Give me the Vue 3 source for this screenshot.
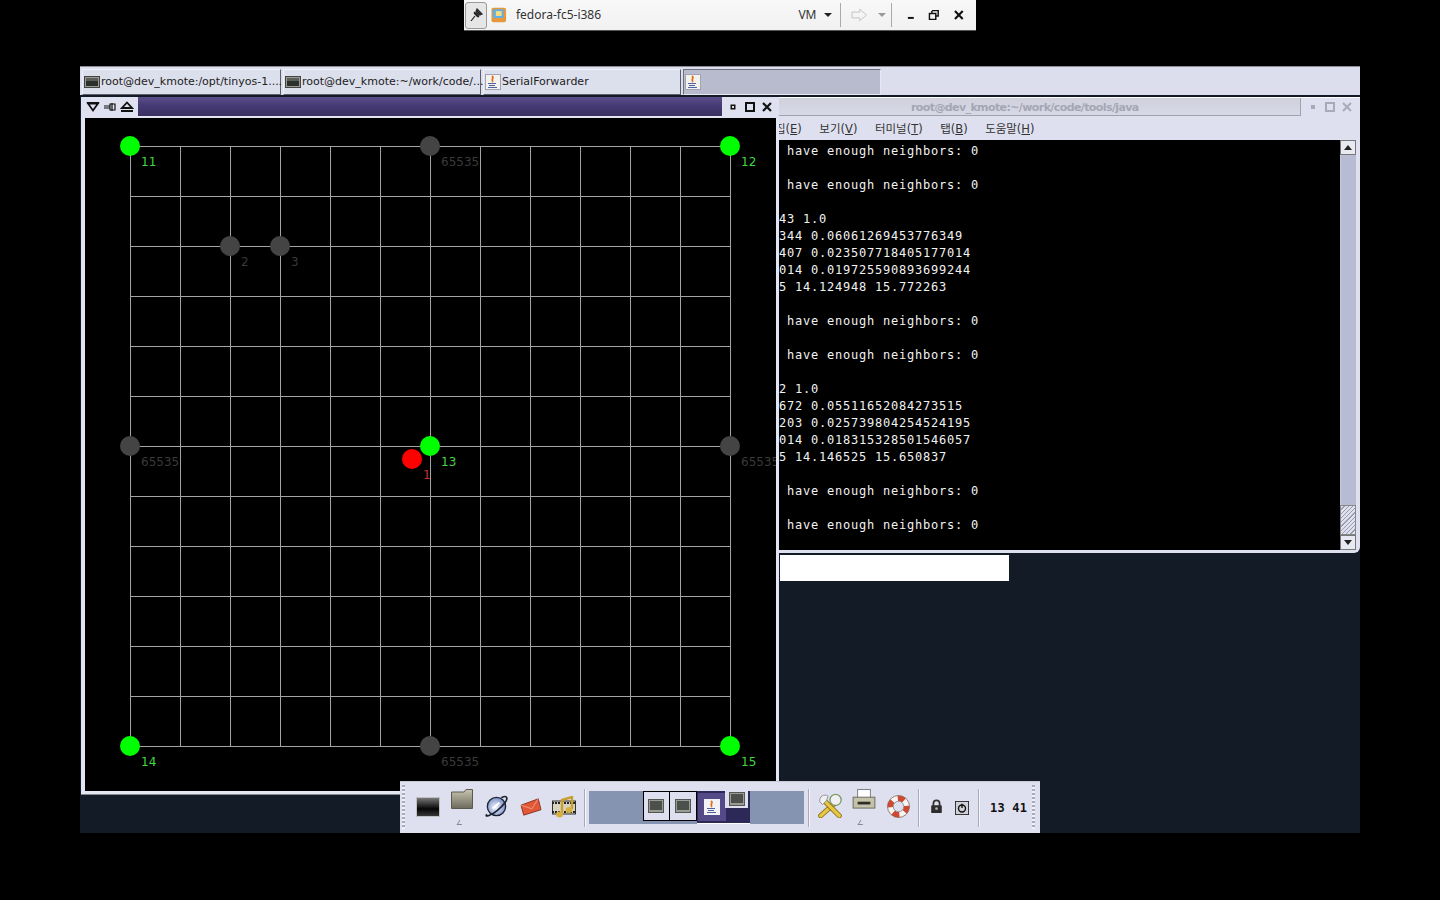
<template>
  <div class="screen">
    <!-- vm toolbar -->
    <div class="vmbar">
      <div class="pin">
        <svg width="18" height="18" viewBox="0 0 18 18"><path d="M4 15 L8 10 M7 6 L12 11 M9 4 L14 9 M10 3 L15 8 L12 9 L9 6 Z M7 7 L11 11" stroke="#222" stroke-width="1.2" fill="none"/></svg>
      </div>
      <svg class="vmicon" width="16" height="16" viewBox="0 0 16 16">
        <rect x="0.5" y="0.5" width="15" height="15" rx="2" fill="#e6983c"/>
        <rect x="2" y="2" width="11" height="9" rx="1" fill="#5fb0e6"/>
        <rect x="5" y="4" width="6" height="5" fill="#f4dc80"/>
      </svg>
      <span class="vmname">fedora-fc5-i386</span>
      <span class="vmmenu">VM</span>
      <span class="caret"></span>
      <span class="vsep vsep1"></span>
      <svg class="arrow" width="18" height="14" viewBox="0 0 18 14"><path d="M1 4 H9 V1 L16 7 L9 13 V10 H1 Z" fill="#f4f4f4" stroke="#c4c4c4"/></svg>
      <span class="caret light"></span>
      <span class="vsep vsep2"></span>
      <svg class="winbtn" width="12" height="12" viewBox="0 0 12 12"><rect x="3" y="8" width="6" height="2" fill="#111"/></svg>
      <svg class="winbtn" width="12" height="12" viewBox="0 0 12 12"><path d="M4 1.5 H10.5 V7 H8.5 M1.5 4.5 H8 V10.5 H1.5 Z M4 2 V4" stroke="#111" stroke-width="1.5" fill="none"/></svg>
      <svg class="winbtn last" width="12" height="12" viewBox="0 0 12 12"><path d="M2 2 L10 10 M10 2 L2 10" stroke="#111" stroke-width="2.2"/></svg>
    </div>

    <div class="desktop">
      <!-- task bar -->
      <div class="taskbar">
        <div v-for="t in tabs" :key="t.id" class="tab" :class="{ active: t.active }">
          <svg v-if="t.kind === 'term'" class="tabicon" width="16" height="16" viewBox="0 0 16 16">
            <rect x="0.5" y="2.5" width="15" height="11" fill="#9a9c94" stroke="#444"/>
            <rect x="2" y="4" width="12" height="8" fill="#2c302c"/>
            <rect x="2" y="4" width="12" height="3" fill="#5c605a"/>
          </svg>
          <svg v-else class="tabicon" width="16" height="16" viewBox="0 0 16 16">
            <rect x="0.5" y="0.5" width="15" height="15" fill="#f4f2ec" stroke="#a0a4b4"/>
            <path d="M7 2 C10 4 5 5 8 8" stroke="#e07020" stroke-width="1.8" fill="none"/>
            <path d="M3 9.5 H11 M4 11.5 H10 M3 13.5 H12" stroke="#5060a0" stroke-width="1.1"/>
          </svg>
          <span class="tabtext">{{ t.label }}</span>
        </div>
      </div>

      <!-- terminal window -->
      <div class="termwin">
        <div class="termtitle">
          <div class="termcaption">root@dev_kmote:~/work/code/tools/java</div>
          <div class="termbtns">
            <svg width="12" height="12" viewBox="0 0 12 12"><rect x="4" y="4" width="4" height="4" fill="#a8aab8"/></svg>
            <svg width="12" height="12" viewBox="0 0 12 12"><rect x="2" y="2" width="8" height="8" fill="none" stroke="#a8aab8" stroke-width="2"/></svg>
            <svg width="12" height="12" viewBox="0 0 12 12"><path d="M2 2 L10 10 M10 2 L2 10" stroke="#a8aab8" stroke-width="2"/></svg>
          </div>
        </div>
        <div class="menubar">
          <span v-for="m in menus" :key="m.key" class="menuitem">{{ m.label }}(<u>{{ m.key }}</u>)</span>
        </div>
        <div class="termbody">
          <pre class="output">{{ output }}</pre>
          <div class="scrollbar">
            <div class="sbtn"><span class="up"></span></div>
            <div class="strack"></div>
            <div class="sgrip"></div>
            <div class="sbtn"><span class="down"></span></div>
          </div>
        </div>
      </div>

      <div class="whitebox"></div>

      <!-- oscilloscope window -->
      <div class="gridwin">
        <div class="gridtitle">
          <div class="titleleft">
            <svg width="14" height="12" viewBox="0 0 14 12"><path d="M2 2.5 H12 L7 9.5 Z" fill="none" stroke="#111" stroke-width="1.8"/><rect x="1" y="1" width="12" height="2" fill="#111"/></svg>
            <svg width="14" height="12" viewBox="0 0 14 12"><path d="M1 5 H7 M1 7 H7 M7 3 H12 V9 H7 Z M9 2 V10" fill="none" stroke="#111" stroke-width="1.2"/></svg>
            <svg width="14" height="12" viewBox="0 0 14 12"><path d="M7 1.5 L12 7 H2 Z" fill="none" stroke="#111" stroke-width="1.8"/><rect x="1" y="9" width="12" height="2" fill="#111"/></svg>
          </div>
          <div class="titlefill"></div>
          <div class="titleright">
            <svg width="12" height="12" viewBox="0 0 12 12"><rect x="3.5" y="3.5" width="5" height="5" fill="#111"/><rect x="5" y="5" width="2" height="2" fill="#dfe1f0"/></svg>
            <svg width="12" height="12" viewBox="0 0 12 12"><rect x="2" y="2" width="8" height="8" fill="none" stroke="#111" stroke-width="2"/></svg>
            <svg width="12" height="12" viewBox="0 0 12 12"><path d="M2 2 L10 10 M10 2 L2 10" stroke="#111" stroke-width="2.2"/></svg>
          </div>
        </div>
        <svg class="canvas" width="691" height="673" viewBox="85 118 691 673">
          <line v-for="x in lines" :key="'v' + x" :x1="x" y1="146" :x2="x" y2="746" class="gridline" />
          <line v-for="y in lines2" :key="'h' + y" x1="130" :y1="y" x2="730" :y2="y" class="gridline" />
          <g v-for="n in nodes" :key="n.x + '-' + n.y">
            <circle :cx="n.x" :cy="n.y" r="10" :fill="n.fill" />
            <text :x="n.x + n.dx" :y="n.y + 19.5" :fill="n.color" class="nodelabel">{{ n.label }}</text>
          </g>
        </svg>
      </div>

      <!-- gnome panel -->
      <div class="panel">
        <div class="handle"></div>

        <svg class="ic term" width="24" height="20" viewBox="0 0 24 20">
          <defs><linearGradient id="tg" x1="0" y1="0" x2="0" y2="1"><stop offset="0" stop-color="#7c7c7c"/><stop offset="0.6" stop-color="#050505"/><stop offset="1" stop-color="#3c3c3c"/></linearGradient></defs>
          <rect x="0.5" y="0.5" width="23" height="19" fill="url(#tg)" stroke="#c0c0c0"/>
        </svg>
        <div class="drawer folder">
          <svg width="22" height="20" viewBox="0 0 22 20">
            <defs><linearGradient id="fg" x1="0" y1="0" x2="0" y2="1"><stop offset="0" stop-color="#c8c4b0"/><stop offset="1" stop-color="#6e6a5c"/></linearGradient></defs>
            <path d="M0.5 3 H13 L15 0.5 H21.5 V19.5 H0.5 Z" fill="url(#fg)" stroke="#5c5a50"/>
          </svg>
          <i></i>
        </div>
        <svg class="ic globe" width="25" height="25" viewBox="0 0 26 26">
          <defs><radialGradient id="gg" cx="0.45" cy="0.55" r="0.6"><stop offset="0" stop-color="#f4f6ff"/><stop offset="1" stop-color="#7088c0"/></radialGradient></defs>
          <circle cx="13" cy="13" r="9.5" fill="url(#gg)" stroke="#1c2434" stroke-width="1.4"/>
          <path d="M3 21 C0 25 8 22 14 17 C20 12 26 5 23 3 C22 2 20 3 18 4" fill="none" stroke="#1c2434" stroke-width="1.8"/>
          <path d="M9 15 L16 9" stroke="#fff" stroke-width="2"/>
        </svg>
        <svg class="ic mail" width="24" height="20" viewBox="0 0 24 22">
          <path d="M1 9 L20 2 L23 14 L4 20 Z" fill="#e05838" stroke="#8a3020"/>
          <path d="M1 9 L13 13 L20 2" fill="none" stroke="#f0a080"/>
        </svg>
        <svg class="ic film" width="24" height="22" viewBox="0 0 24 22">
          <rect x="0.5" y="5" width="23" height="13" fill="#d8d4c0" stroke="#333"/>
          <path d="M0 7 H24 M0 16 H24" stroke="#222" stroke-width="2" stroke-dasharray="2 1"/>
          <path d="M10 18 V4 L20 1 V13" fill="none" stroke="#c8a030" stroke-width="2.4"/>
          <ellipse cx="7.5" cy="18.5" rx="3.5" ry="3" fill="#d8b040"/>
          <ellipse cx="17" cy="14" rx="3.5" ry="3" fill="#d8b040"/>
        </svg>

        <span class="sep sep1"></span>

        <div class="pager">
          <div class="wsp"></div>
          <div class="wsp">
            <div class="tasks">
              <div class="tbtn"><svg width="16" height="14" viewBox="0 0 16 14"><rect x="0.5" y="0.5" width="15" height="13" fill="#9a9c94" stroke="#555"/><rect x="2" y="2" width="12" height="9" fill="#4c504c"/></svg></div>
              <div class="tbtn"><svg width="16" height="14" viewBox="0 0 16 14"><rect x="0.5" y="0.5" width="15" height="13" fill="#9a9c94" stroke="#555"/><rect x="2" y="2" width="12" height="9" fill="#4c504c"/></svg></div>
            </div>
          </div>
          <div class="wsp current">
            <div class="curbtn"><svg width="16" height="16" viewBox="0 0 16 16"><rect width="16" height="16" fill="#f2f2f6"/><path d="M7 2 C10 4 5 5 8 8" stroke="#e07020" stroke-width="1.8" fill="none"/><path d="M3 9.5 H11 M4 11.5 H10 M3 13.5 H12" stroke="#5060a0" stroke-width="1.1"/></svg></div>
            <div class="curtop"><svg width="16" height="14" viewBox="0 0 16 14"><rect x="0.5" y="0.5" width="15" height="13" fill="#9a9c94" stroke="#555"/><rect x="2" y="2" width="12" height="9" fill="#4c504c"/></svg></div>
          </div>
          <div class="wsp"></div>
        </div>

        <span class="sep sep2"></span>

        <svg class="ic tools" width="26" height="25" viewBox="0 0 28 26">
          <path d="M4 24 L22 8" stroke="#8a7020" stroke-width="5.5" stroke-linecap="round"/>
          <path d="M4 24 L22 8" stroke="#e8c840" stroke-width="3.6" stroke-linecap="round"/>
          <path d="M24 24 L8 8" stroke="#8a7020" stroke-width="5.5" stroke-linecap="round"/>
          <path d="M24 24 L8 8" stroke="#e8c840" stroke-width="3.6" stroke-linecap="round"/>
          <path d="M3 9 C2 3 8 0 12 3 L10 8 L6 12 Z" fill="#f0f0f4" stroke="#8a8a94"/>
          <circle cx="20" cy="7" r="6" fill="#f0f0f4" stroke="#7a9a60" stroke-width="1.4"/>
        </svg>
        <div class="drawer printer">
          <svg width="24" height="20" viewBox="0 0 26 22">
            <rect x="6" y="0.5" width="14" height="10" fill="#fff" stroke="#777"/>
            <rect x="1" y="9" width="24" height="12" fill="#c4c2a8" stroke="#66645a"/>
            <rect x="6" y="14" width="14" height="3" fill="#2c2c24"/>
          </svg>
          <i></i>
        </div>
        <svg class="ic buoy" width="23" height="23" viewBox="0 0 24 24">
          <circle cx="12" cy="12" r="8.5" fill="none" stroke="#f4f4f4" stroke-width="6"/>
          <circle cx="12" cy="12" r="8.5" fill="none" stroke="#d04830" stroke-width="6" stroke-dasharray="7 6.35" stroke-dashoffset="1"/>
          <circle cx="12" cy="12" r="11.5" fill="none" stroke="#80604c" stroke-width="0.8"/>
          <circle cx="12" cy="12" r="5.5" fill="#dfe0ef" stroke="#80807c" stroke-width="0.8"/>
        </svg>

        <span class="sep sep3"></span>

        <svg class="lock" width="13" height="15" viewBox="0 0 14 17">
          <path d="M3.5 8 V5 C3.5 0.5 10.5 0.5 10.5 5 V8" fill="none" stroke="#333" stroke-width="2"/>
          <rect x="1" y="7" width="12" height="9" rx="1" fill="#2c2c2c"/>
          <circle cx="7" cy="11" r="1.6" fill="#aaa"/>
        </svg>
        <svg class="power" width="14" height="14" viewBox="0 0 16 16">
          <rect x="0.5" y="0.5" width="15" height="15" fill="#d0d0d8" stroke="#222"/>
          <circle cx="8" cy="8.5" r="4" fill="none" stroke="#111" stroke-width="1.6"/>
          <path d="M8 3 V8" stroke="#111" stroke-width="1.6"/>
        </svg>

        <span class="sep sep4"></span>

        <div class="clock">13 41</div>
        <div class="handle right"></div>
      </div>
    </div>
  </div>
</template>

<script setup>
const tabs = [
  { id: 1, kind: 'term', label: 'root@dev_kmote:/opt/tinyos-1....' },
  { id: 2, kind: 'term', label: 'root@dev_kmote:~/work/code/...' },
  { id: 3, kind: 'java', label: 'SerialForwarder' },
  { id: 4, kind: 'java', label: '', active: true }
]

const menus = [
  { label: '집', key: 'E' },
  { label: '보기', key: 'V' },
  { label: '터미널', key: 'T' },
  { label: '탭', key: 'B' },
  { label: '도움말', key: 'H' }
]

const output = ` have enough neighbors: 0

 have enough neighbors: 0

43 1.0
344 0.06061269453776349
407 0.023507718405177014
014 0.019725590893699244
5 14.124948 15.772263

 have enough neighbors: 0

 have enough neighbors: 0

2 1.0
672 0.05511652084273515
203 0.025739804254524195
014 0.018315328501546057
5 14.146525 15.650837

 have enough neighbors: 0

 have enough neighbors: 0`

const lines = Array.from({ length: 13 }, (_, i) => 130 + i * 50)
const lines2 = lines.map((x) => x + 16)

const GREEN = '#00ff00'
const GREY = '#444444'
const nodes = [
  { x: 130, y: 146, fill: GREEN, color: '#3fd83f', label: '11', dx: 11 },
  { x: 430, y: 146, fill: GREY, color: '#3a3a3a', label: '65535', dx: 11 },
  { x: 730, y: 146, fill: GREEN, color: '#3fd83f', label: '12', dx: 11 },
  { x: 230, y: 246, fill: GREY, color: '#3a3a3a', label: '2', dx: 11 },
  { x: 280, y: 246, fill: GREY, color: '#3a3a3a', label: '3', dx: 11 },
  { x: 130, y: 446, fill: GREY, color: '#3a3a3a', label: '65535', dx: 11 },
  { x: 730, y: 446, fill: GREY, color: '#3a3a3a', label: '65535', dx: 11 },
  { x: 412, y: 459, fill: '#ff0000', color: '#c83030', label: '1', dx: 11 },
  { x: 430, y: 446, fill: GREEN, color: '#3fd83f', label: '13', dx: 11 },
  { x: 130, y: 746, fill: GREEN, color: '#3fd83f', label: '14', dx: 11 },
  { x: 430, y: 746, fill: GREY, color: '#3a3a3a', label: '65535', dx: 11 },
  { x: 730, y: 746, fill: GREEN, color: '#3fd83f', label: '15', dx: 11 }
]
</script>

<style scoped>
.screen {
  position: relative;
  width: 1440px;
  height: 900px;
  background: #000;
  overflow: hidden;
  font-family: "DejaVu Sans", sans-serif;
}

/* vm toolbar */
.vmbar {
  position: absolute;
  left: 464px;
  top: 0;
  width: 512px;
  height: 31px;
  box-sizing: border-box;
  display: flex;
  align-items: center;
  background: linear-gradient(#f8f8f8, #f1f1f1);
  border-bottom: 1px solid #555;
  font-family: "Noto Sans", sans-serif;
  font-size: 12px;
  color: #333;
}
.pin {
  width: 23px;
  height: 27px;
  margin-left: 1px;
  display: flex;
  align-items: center;
  justify-content: center;
  box-sizing: border-box;
  border: 1px solid #9a9a9a;
  border-radius: 3px;
  background: #e6e6e6;
}
.vmicon {
  margin-left: 4px;
}
.vmname {
  margin-left: 9px;
  width: 291px;
  padding-bottom: 2px;
}
.vmmenu {
  width: 26px;
  padding-bottom: 2px;
}
.caret {
  width: 0;
  height: 0;
  border-left: 4px solid transparent;
  border-right: 4px solid transparent;
  border-top: 4px solid #222;
}
.caret.light {
  border-top-color: #999;
  margin-left: 10px;
}
.vsep {
  width: 1px;
  height: 24px;
  background: #aaa;
}
.vsep1 {
  margin-left: 8px;
}
.arrow {
  margin-left: 10px;
}
.vsep2 {
  margin-left: 5px;
  margin-right: 13px;
}
.winbtn {
  margin-right: 11px;
}
.winbtn + .winbtn.last {
  margin-left: 3px;
}

.desktop {
  position: absolute;
  left: 80px;
  top: 66px;
  width: 1280px;
  height: 767px;
  background: #121b26;
}

/* task bar */
.taskbar {
  height: 29px;
  box-sizing: border-box;
  padding: 2px 2px 1px;
  display: flex;
  gap: 2px;
  background: #dcdeee;
  border-top: 1px solid #8a8c98;
}
.tab {
  width: 198px;
  height: 26px;
  box-sizing: border-box;
  padding-left: 1px;
  display: flex;
  align-items: center;
  gap: 1px;
  background: #dcdfec;
  border: 1px solid #888c9c;
  border-color: #f0f1f8 #5c5e6a #5c5e6a #f0f1f8;
  font-size: 11px;
  color: #222;
}
.tab:first-child {
  width: 199px;
}
.tab.active {
  background: #b8bbcd;
  border-color: #6c6e7a #e8e8f0 #e8e8f0 #6c6e7a;
}
.tabicon {
  flex: none;
}
.tabtext {
  white-space: nowrap;
  padding-bottom: 2px;
}

/* terminal */
.termwin {
  position: absolute;
  left: 690px;
  top: 31px;
  width: 590px;
  height: 456px;
  display: flex;
  flex-direction: column;
  background: #dfe0ef;
  border-radius: 0 6px 6px 0;
}
.termtitle {
  height: 21px;
  display: flex;
  background: #dfe0ef;
  border-top: 1px solid #fff;
  box-sizing: border-box;
}
.termcaption {
  width: 531px;
  height: 18px;
  box-sizing: border-box;
  padding-left: 141px;
  font-size: 11px;
  font-weight: bold;
  letter-spacing: -0.6px;
  line-height: 19px;
  color: #a4a6b4;
  background: linear-gradient(#cfd0dc, #d8d9e6);
  border-right: 1px solid #a0a2ae;
  border-bottom: 1px solid #a0a2ae;
}
.termbtns {
  display: flex;
  gap: 5px;
  padding: 3px 0 0 6px;
}
.menubar {
  height: 22px;
  box-sizing: border-box;
  padding: 0 0 2px 5px;
  display: flex;
  align-items: center;
  gap: 17.5px;
  font-family: "DejaVu Sans", "Noto Sans CJK KR", sans-serif;
  font-size: 11.5px;
  color: #333;
  white-space: nowrap;
}
.menuitem {
  flex: none;
}
.termbody {
  flex: 1;
  display: flex;
  margin-bottom: 3px;
  margin-right: 4px;
  background: #000;
  min-height: 0;
}
.output {
  flex: 1;
  margin: 0;
  padding-top: 3px;
  padding-left: 9px;
  font-family: "DejaVu Sans Mono", monospace;
  font-size: 12px;
  line-height: 17px;
  letter-spacing: 0.78px;
  color: #f2f2f2;
  overflow: hidden;
}
.scrollbar {
  width: 16px;
  display: flex;
  flex-direction: column;
  background: #dfe0ef;
}
.sbtn {
  height: 15px;
  display: flex;
  align-items: center;
  justify-content: center;
  background: #e8e9f2;
  border: 1px solid #777;
  box-sizing: border-box;
}
.up,
.down {
  width: 0;
  height: 0;
  border-left: 4px solid transparent;
  border-right: 4px solid transparent;
}
.up {
  border-bottom: 5px solid #222;
}
.down {
  border-top: 5px solid #222;
}
.strack {
  flex: 1;
  background: #b8bbd4;
  border-left: 1px solid #c8c8d8;
}
.sgrip {
  height: 30px;
  box-sizing: border-box;
  border: 1px solid #888;
  background: repeating-linear-gradient(135deg, #dfe0ef 0 2px, #9a9cac 2px 3px);
  background-clip: padding-box;
}

.whitebox {
  position: absolute;
  left: 700px;
  top: 489px;
  width: 229px;
  height: 26px;
  background: #fff;
}

/* grid window */
.gridwin {
  position: absolute;
  left: 1px;
  top: 31px;
  width: 698px;
  height: 698px;
  box-sizing: border-box;
  padding: 0 3px 3px 4px;
  display: flex;
  flex-direction: column;
  background: #e4e5f2;
  border-radius: 6px 6px 0 0;
  border-bottom: 1px solid #888;
}
.gridtitle {
  height: 21px;
  margin: 0 -3px 0 -4px;
  display: flex;
  flex: none;
}
.titleleft {
  width: 57px;
  padding: 4px 0 0 5px;
  box-sizing: border-box;
  display: flex;
  gap: 3px;
  background: #dfe1f0;
}
.titlefill {
  flex: 1;
  margin-bottom: 2px;
  background: linear-gradient(#5c4e8c, #463a74 45%, #3a3060);
}
.titleright {
  width: 57px;
  padding: 4px 0 0 5px;
  box-sizing: border-box;
  display: flex;
  gap: 5px;
  background: #dfe1f0;
}
.canvas {
  flex: none;
  display: block;
  background: #000;
  overflow: hidden;
}
.gridline {
  stroke: #a4a4a4;
  stroke-width: 1;
  shape-rendering: crispEdges;
}
.nodelabel {
  font-family: "DejaVu Sans", sans-serif;
  font-size: 12px;
}

/* panel */
.panel {
  position: absolute;
  left: 320px;
  top: 715px;
  width: 640px;
  height: 52px;
  box-sizing: border-box;
  display: flex;
  align-items: flex-start;
  background: #dfe0ef;
  border-top: 1px solid #c8c9d8;
}
.handle {
  width: 6px;
  height: 44px;
  margin: 3px 0 0 2px;
  flex: none;
  background: repeating-linear-gradient(#a8aab8 0 2px, #f0f0f8 2px 4px);
  background-size: 3px 100%;
  background-repeat: no-repeat;
}
.handle.right {
  margin-left: auto;
  margin-right: 2px;
}
.ic {
  flex: none;
}
.term {
  margin: 15px 0 0 8px;
}
.folder {
  margin: 7px 0 0 11px;
}
.globe {
  margin: 12px 0 0 11px;
}
.mail {
  margin: 15px 0 0 10px;
}
.film {
  margin: 14px 0 0 9px;
}
.drawer {
  position: relative;
  flex: none;
  height: 40px;
}
.drawer svg {
  display: block;
}
.drawer i {
  position: absolute;
  left: 7px;
  top: 31px;
  width: 4px;
  height: 4px;
  border-bottom: 1px solid #888;
  border-left: 1px solid #888;
  transform: skewX(-30deg);
}
.sep {
  flex: none;
  width: 1px;
  margin-top: 7px;
  height: 38px;
  background: #a8aab8;
  border-right: 1px solid #f4f4fa;
}
.sep1 {
  margin-left: 8px;
}
.pager {
  margin-left: 3px;
  margin-top: 9px;
  height: 33px;
  width: 215px;
  flex: none;
  display: flex;
}
.wsp {
  width: 53.75px;
  background: #8594b0;
}
.tasks {
  display: flex;
  height: 30px;
  background: #dfe0ef;
  border: 1px solid #000;
  box-sizing: border-box;
}
.tbtn {
  flex: 1;
  display: flex;
  align-items: center;
  justify-content: center;
}
.tbtn + .tbtn {
  border-left: 1px solid #000;
}
.current {
  position: relative;
  background: #2c2858;
  border-bottom: 1px solid #fff;
  box-sizing: border-box;
}
.curbtn {
  width: 28px;
  height: 28px;
  margin: 2px 0 0 1px;
  box-sizing: border-box;
  padding: 6px;
  background: #544a88;
}
.curtop {
  position: absolute;
  right: 2px;
  top: 0;
  width: 23px;
  height: 17px;
  display: flex;
  justify-content: center;
  padding-top: 1px;
  box-sizing: border-box;
  background: #dfe0ef;
}
.sep2 {
  margin-left: 4px;
}
.tools {
  margin: 11px 0 0 7px;
}
.printer {
  margin: 7px 0 0 9px;
}
.buoy {
  margin: 13px 0 0 11px;
}
.sep3 {
  margin-left: 8px;
}
.lock {
  flex: none;
  margin: 17px 0 0 10px;
}
.power {
  flex: none;
  margin: 19px 0 0 12px;
}
.sep4 {
  margin-left: 9px;
}
.clock {
  margin-left: 10px;
  margin-top: 17px;
  font-family: "DejaVu Sans Mono", monospace;
  font-weight: bold;
  font-size: 12px;
  line-height: 18px;
  color: #111;
  letter-spacing: 0.2px;
  white-space: pre;
}
</style>
